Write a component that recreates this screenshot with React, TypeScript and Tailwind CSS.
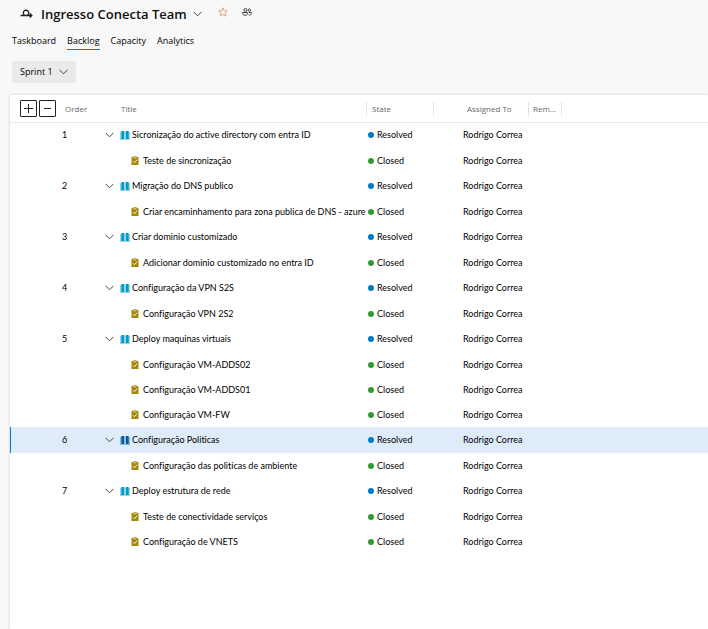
import { useState } from "react";

type ItemKind = "story" | "task";
type ItemState = "Resolved" | "Closed";

interface WorkItem {
  kind: ItemKind;
  title: string;
  state: ItemState;
  order?: number;
}

const assignee = "Rodrigo Correa";

const items: WorkItem[] = [
  { kind: "story", order: 1, title: "Sicronização do active directory com entra ID", state: "Resolved" },
  { kind: "task", title: "Teste de sincronização", state: "Closed" },
  { kind: "story", order: 2, title: "Migração do DNS publico", state: "Resolved" },
  { kind: "task", title: "Criar encaminhamento para zona publica de DNS - azure", state: "Closed" },
  { kind: "story", order: 3, title: "Criar dominio customizado", state: "Resolved" },
  { kind: "task", title: "Adicionar dominio customizado no entra ID", state: "Closed" },
  { kind: "story", order: 4, title: "Configuração da VPN S2S", state: "Resolved" },
  { kind: "task", title: "Configuração VPN 2S2", state: "Closed" },
  { kind: "story", order: 5, title: "Deploy maquinas virtuais", state: "Resolved" },
  { kind: "task", title: "Configuração VM-ADDS02", state: "Closed" },
  { kind: "task", title: "Configuração VM-ADDS01", state: "Closed" },
  { kind: "task", title: "Configuração VM-FW", state: "Closed" },
  { kind: "story", order: 6, title: "Configuração Politicas", state: "Resolved" },
  { kind: "task", title: "Configuração das politicas de ambiente", state: "Closed" },
  { kind: "story", order: 7, title: "Deploy estrutura de rede", state: "Resolved" },
  { kind: "task", title: "Teste de conectividade serviços", state: "Closed" },
  { kind: "task", title: "Configuração de VNETS", state: "Closed" },
];

const tabs = ["Taskboard", "Backlog", "Capacity", "Analytics"];

function Chevron() {
  return (
    <svg width="9" height="6" viewBox="0 0 9 6" fill="none" stroke="#333" strokeWidth="0.9" aria-hidden="true">
      <path d="M0.5 0.8 L4.5 4.8 L8.5 0.8" />
    </svg>
  );
}

function SprintIcon() {
  return (
    <svg width="13" height="10" viewBox="0 0 13 10" fill="none" stroke="#222" strokeWidth="1.4" aria-hidden="true">
      <path d="M0.5 6.5 H11.5 M9.7 4.5 L11.8 6.5 L9.7 8.5" />
      <path d="M4.4 6.5 C2.4 4.6 3.2 1.2 6 1.2 C8.8 1.2 9.6 4.6 7.6 6.5" />
    </svg>
  );
}

function StarIcon() {
  return (
    <svg width="10" height="10" viewBox="0 0 10 10" fill="none" stroke="#df9a76" strokeWidth="0.9" aria-hidden="true">
      <path d="M5 0.8 L6.2 3.7 L9.4 3.9 L7 6 L7.7 9.1 L5 7.4 L2.3 9.1 L3 6 L0.6 3.9 L3.8 3.7 Z" />
    </svg>
  );
}

function PeopleIcon() {
  return (
    <svg width="10" height="8" viewBox="0 0 10 8" fill="none" stroke="#333" strokeWidth="0.9" aria-hidden="true">
      <circle cx="3.4" cy="2" r="1.5" />
      <circle cx="7.4" cy="2.2" r="1.2" />
      <path d="M0.6 4.5 H5.6 V5.6 C5.6 7.8 0.6 7.8 0.6 5.6 Z M6.8 4.5 H9.4 V5.4 C9.4 6.9 8 7.2 6.6 6.9" />
    </svg>
  );
}

function BookIcon({ selected }: { selected: boolean }) {
  return (
    <svg width="10" height="9" viewBox="0 0 10 9" aria-hidden="true" className="shrink-0">
      <path d="M0 1 H10 V9 H0 Z" fill={selected ? "#8fb9dc" : "#9bd3e6"} />
      <path d="M1.4 0 H3.8 Q4.5 0.2 4.5 1 V8 H1.4 Z M8.6 0 H6.2 Q5.5 0.2 5.5 1 V8 H8.6 Z" fill={selected ? "#005a9e" : "#009ccc"} />
      <path d="M5 0.8 V8" stroke="#fff" strokeWidth="0.8" />
    </svg>
  );
}

function TaskIcon() {
  return (
    <svg width="8" height="9" viewBox="0 0 8 9" aria-hidden="true" className="shrink-0">
      <path d="M0.5 1 H2.3 V0.2 H5.7 V1 H7.5 V9 H0.5 Z" fill="#a4880a" />
      <path d="M2.5 1.7 H5.5" stroke="#fff" strokeWidth="0.7" />
      <path d="M2 5.3 L3.4 6.7 L6.2 3.7" fill="none" stroke="#fff" strokeWidth="0.9" />
    </svg>
  );
}

function ItemRow({ item, selected, onSelect }: { item: WorkItem; selected: boolean; onSelect: () => void }) {
  const story = item.kind === "story";
  return (
    <tr onClick={onSelect} className={`${story ? "h-[26px]" : "h-[25px]"} ${selected ? "bg-[#deecf9]" : ""}`}>
      <td className={selected ? "border-l border-[#0078d4]" : ""} />
      <td className="pl-0.5">{item.order}</td>
      <td>
        <div className={`flex items-center ${story ? "" : "pl-[26px]"}`}>
          {story && (
            <button type="button" aria-label="Collapse" className="mr-1.5 flex w-[9px] shrink-0">
              <Chevron />
            </button>
          )}
          {story ? <BookIcon selected={selected} /> : <TaskIcon />}
          <span className={story ? "ml-0.5" : "ml-1"}>{item.title}</span>
        </div>
      </td>
      <td>
        <div className="flex items-center gap-[3px] pl-0.5">
          <span className={`size-1.5 rounded-full ${item.state === "Resolved" ? "bg-[#007acc]" : "bg-[#339933]"}`} />
          {item.state}
        </div>
      </td>
      <td className="pl-[30px]">{assignee}</td>
      <td />
      <td />
    </tr>
  );
}

export default function App() {
  const [selected, setSelected] = useState(12);

  return (
    <main className="flex min-h-screen flex-col bg-[#f8f8f8] font-['Open_Sans','Noto_Sans',sans-serif] text-[9px] leading-3 text-black">
      <header className="flex h-[27px] items-center pl-5">
        <SprintIcon />
        <h1 className="ml-2 text-[13px] leading-5 font-semibold text-[#111]">Ingresso Conecta Team</h1>
        <button type="button" aria-label="Choose team" className="ml-1.5"><Chevron /></button>
        <button type="button" aria-label="Favorite" className="ml-4 pb-1"><StarIcon /></button>
        <button type="button" aria-label="Team members" className="ml-3.5 pb-1"><PeopleIcon /></button>
      </header>

      <nav className="flex h-[23px] gap-[11px] pl-3 pt-2">
        {tabs.map((tab) => (
          <a key={tab} href="#" className={`h-[15px] ${tab === "Backlog" ? "border-b border-[#0078d4]" : ""}`}>
            {tab}
          </a>
        ))}
      </nav>

      <div className="flex h-[45px] items-start pl-3 pt-[11px]">
        <button type="button" className="flex h-[22px] items-center gap-1.5 rounded-xs bg-[#eaeaea] px-2">
          Sprint 1 <Chevron />
        </button>
      </div>

      <section className="ml-2.5 grow rounded-tl-xs bg-white shadow-[0_0_3px_rgba(0,0,0,0.2)]">
        <table className="w-full table-fixed border-separate border-spacing-0 text-left whitespace-nowrap">
          <colgroup>
            <col className="w-[50px]" />
            <col className="w-[45px]" />
            <col className="w-[261px]" />
            <col className="w-[67px]" />
            <col className="w-[95px]" />
            <col className="w-[33px]" />
            <col />
          </colgroup>
          <thead className="text-[8px] text-[#666] shadow-[0_1px_0_#eaeaea]">
            <tr className="h-[27px]">
              <th>
                <div className="flex gap-0.5 pl-2.5">
                  <button type="button" aria-label="Expand all" className="flex size-[17px] shrink-0 items-center justify-center rounded-[1px] border border-[#222]">
                    <svg width="9" height="9" viewBox="0 0 9 9" stroke="#222"><path d="M0 4.5 H9 M4.5 0 V9" /></svg>
                  </button>
                  <button type="button" aria-label="Collapse all" className="flex size-[17px] shrink-0 items-center justify-center rounded-[1px] border border-[#222]">
                    <svg width="7" height="9" viewBox="0 0 7 9" stroke="#222"><path d="M0 4.5 H7" /></svg>
                  </button>
                </div>
              </th>
              <th className="pl-[5px] font-normal">Order</th>
              <th className="pl-4 font-normal">Title</th>
              <th className="font-normal"><div className="border-l border-[#e4e4e4] py-px pl-[5px]">State</div></th>
              <th className="font-normal"><div className="border-l border-[#e4e4e4] py-px pl-[33px]">Assigned To</div></th>
              <th className="font-normal"><div className="border-l border-[#e4e4e4] py-px pl-1">Rem...</div></th>
              <th className="font-normal"><div className="h-3.5 border-l border-[#e4e4e4]" /></th>
            </tr>
          </thead>
          <tbody className="font-['Lato','Open_Sans',sans-serif] [font-variant-ligatures:none]">
            {items.map((item, index) => (
              <ItemRow key={item.title} item={item} selected={index === selected} onSelect={() => setSelected(index)} />
            ))}
          </tbody>
        </table>
      </section>
    </main>
  );
}
